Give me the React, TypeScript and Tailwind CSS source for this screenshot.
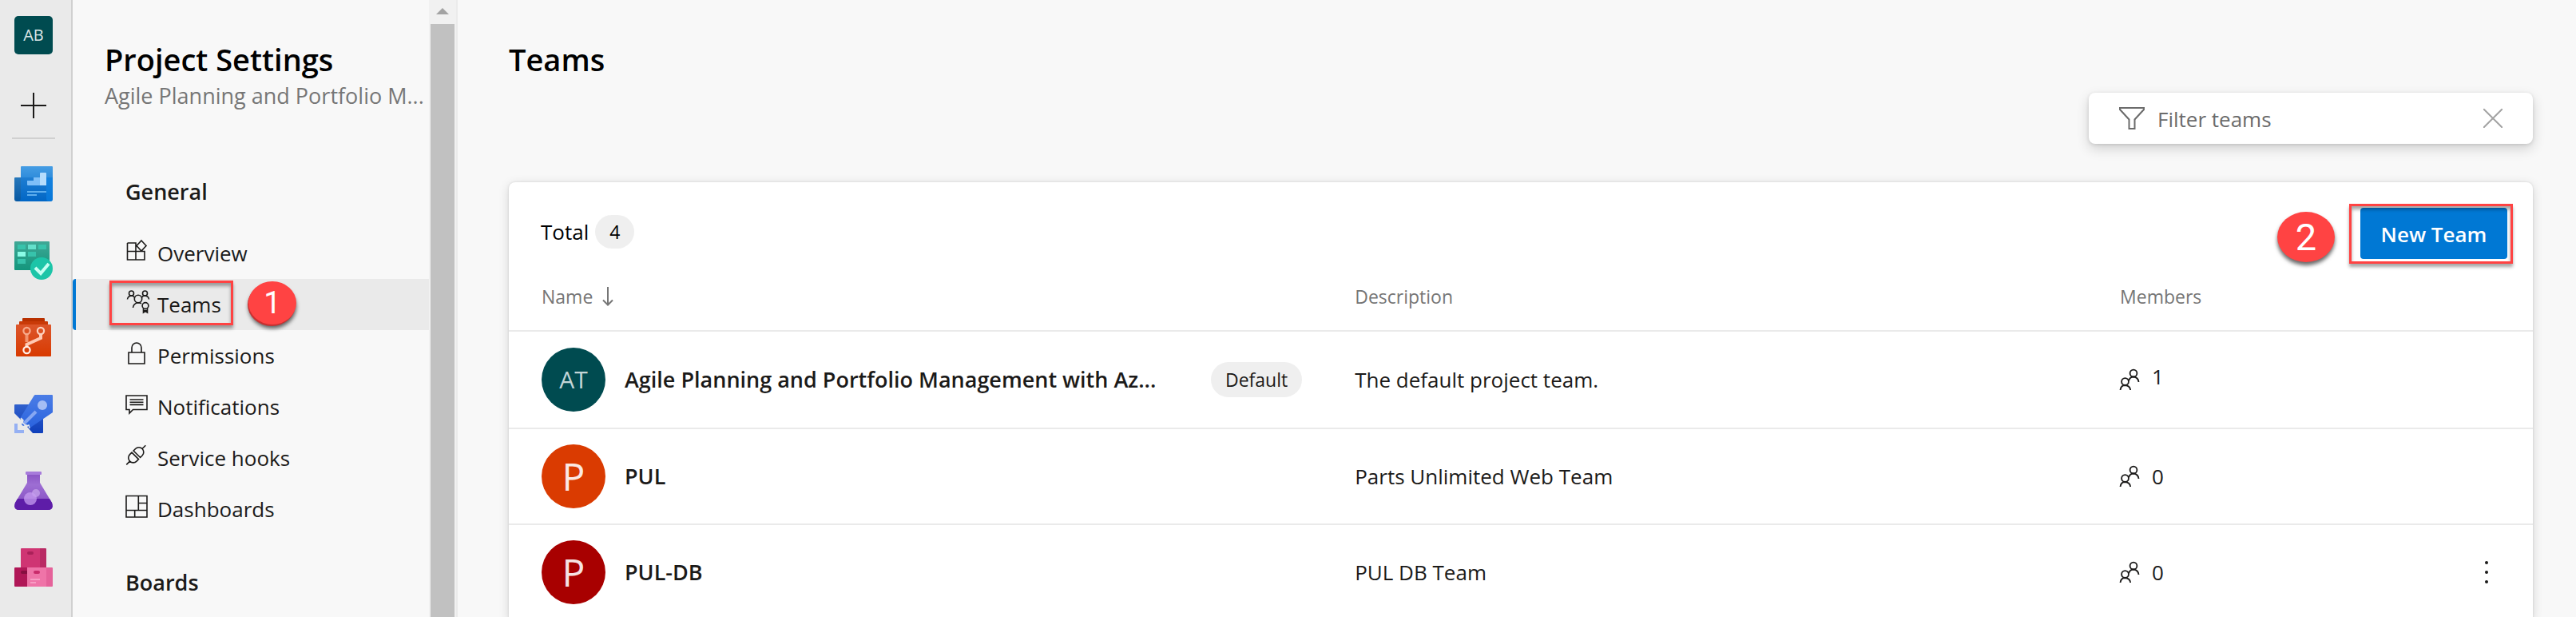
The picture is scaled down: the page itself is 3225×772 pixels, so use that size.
import type { ReactNode } from "react";

function RailIcon({ label, children }: { label: string; children: ReactNode }) {
  return (
    <a href="#" aria-label={label} className="block size-12">
      <svg viewBox="0 0 48 48" className="size-12">{children}</svg>
    </a>
  );
}

function Rail() {
  return (
    <nav aria-label="Services" className="flex shrink-0 flex-col items-center border-r-2 border-[#d0d0d0] bg-[#eaeaea] pt-5 pr-[5px] w-[91px]">
      <svg width="0" height="0" className="absolute">
        <defs>
          <linearGradient id="ov" x1="0" y1="0" x2="0" y2="1"><stop offset="0" stopColor="#459de4" /><stop offset="1" stopColor="#0269c8" /></linearGradient>
          <linearGradient id="ovb" x1="0" y1="0" x2="0" y2="1"><stop offset="0" stopColor="#2878bb" /><stop offset="1" stopColor="#0758a2" /></linearGradient>
          <linearGradient id="bd" x1="0" y1="0" x2="0" y2="1"><stop offset="0" stopColor="#40a896" /><stop offset="1" stopColor="#13967c" /></linearGradient>
          <linearGradient id="rp" x1="0" y1="0" x2="0" y2="1"><stop offset="0" stopColor="#dc562b" /><stop offset="1" stopColor="#d83a01" /></linearGradient>
          <linearGradient id="pl" x1="0" y1="0" x2="0" y2="1"><stop offset="0" stopColor="#4b7de6" /><stop offset="1" stopColor="#2a63de" /></linearGradient>
          <linearGradient id="plb" x1="0" y1="0" x2="0" y2="1"><stop offset="0" stopColor="#3161cd" /><stop offset="1" stopColor="#0f3fbb" /></linearGradient>
          <linearGradient id="fl" x1="0" y1="0" x2="0" y2="1"><stop offset="0" stopColor="#8a54c4" /><stop offset="0.3" stopColor="#9d6ed3" /><stop offset="1" stopColor="#7f47bd" /></linearGradient>
        </defs>
      </svg>
      <button type="button" aria-label="Project AB" className="flex size-12 items-center justify-center rounded-[5px] bg-[#004b50] text-[20px] leading-6 text-[#dbe6e7]">AB</button>
      <button type="button" aria-label="Add" className="mt-12 flex size-8">
        <svg viewBox="0 0 32 32" className="size-8"><path d="M16 0v32M0 16h32" stroke="#1b1a19" strokeWidth="2" /></svg>
      </button>
      <hr className="mt-6 w-[54px] border-t-2 border-[#d0d0d0]" />
      <div className="mt-8 flex flex-col gap-12">
        <RailIcon label="Overview">
          <path d="M1 16h9v30H3a3 3 0 0 1-3-3V17q0-1 1-1z" fill="url(#ovb)" />
          <path d="M9 2h38q1 0 1 1v40a3 3 0 0 1-3 3H4q4 0 4-4V3q0-1 1-1z" fill="url(#ov)" />
          <path d="M8 16h32v30H5q3-1 3-4z" fill="#0062bf" opacity=".35" />
          <path d="M40 16h8v27q0 3-4 3-4 0-4-4z" fill="#0a7ee0" opacity=".7" />
          <path d="M16 20h8v-4h8v10H17q-1 0-1-1z" fill="#7fbff8" />
          <path d="M32 11q0-1 1-1h6q1 0 1 1v15h-8z" fill="#b5dcfc" />
          <path d="M16 34h24M16 38h12" stroke="#5eaeee" strokeWidth="2" />
        </RailIcon>
        <RailIcon label="Boards">
          <rect width="44" height="36" rx="1" fill="url(#bd)" />
          <path d="M4 4h10v6H4zM30 4h10v6H30zM17 13h10v6H17zM4 22h10v6H4z" fill="#37c3ab" />
          <path d="M17 4h10v6H17z" fill="#63e0cb" />
          <path d="M4 13h10v6H4z" fill="#8bfbe6" />
          <circle cx="34" cy="34" r="14" fill="#1cc5a8" />
          <path d="M26 33l7 7 10-12" fill="none" stroke="#c6fff3" strokeWidth="4" />
        </RailIcon>
        <RailIcon label="Repos">
          <path d="M11 0h26q1 0 1 1v4H10V1q0-1 1-1z" fill="#b83000" />
          <path d="M7 4h34q1 0 1 1v5H6V5q0-1 1-1z" fill="#c93a08" />
          <rect x="2" y="8" width="44" height="40" rx="1" fill="url(#rp)" />
          <g fill="none" strokeWidth="4">
            <path d="M15.500 20v10" stroke="#f2926e" />
            <path d="M33 20v5l-17.500 8v4" stroke="#ffc9b3" />
          </g>
          <g fill="none" strokeWidth="2.200">
            <circle cx="15.500" cy="16" r="4.100" stroke="#f7a98b" />
            <circle cx="33" cy="16" r="4.100" stroke="#fcd2c0" />
            <circle cx="15.500" cy="40" r="4.100" stroke="#fff0ea" />
          </g>
        </RailIcon>
        <RailIcon label="Pipelines">
          <path d="M1 12h20L8 31l-8-8V13q0-1 1-1zM36 28v19q0 1-1 1H23l-7-8z" fill="url(#plb)" />
          <path d="M26 0h21q1 0 1 1v21L20 41l-5-4-4 2-2-2 2-4-3-5L24 2q1-2 2-2z" fill="url(#pl)" />
          <circle cx="35" cy="13" r="6" fill="#a5bdf4" />
          <path d="M27 21L11.500 36.500" stroke="#86a7f2" strokeWidth="4" />
          <path d="M8 29l3 3-1 3 5 4 3-1 1 4" fill="none" stroke="#eaeaea" strokeWidth="1.500" />
          <path d="M0 36h4v8h8v4H0z" fill="#95b0f3" />
        </RailIcon>
        <RailIcon label="Test Plans">
          <path d="M16 3h16v11l15 25q3 9-5 9H6q-8 0-5-9l15-25z" fill="url(#fl)" />
          <path d="M4 34h40l3 5q3 9-5 9H6q-8 0-5-9z" fill="#5e1da8" />
          <rect x="14" width="20" height="4" rx="1" fill="#a77bdb" />
          <circle cx="27" cy="27" r="5" fill="#c39fe8" opacity=".8" />
          <circle cx="20" cy="34" r="8" fill="#c79cf0" opacity=".75" />
        </RailIcon>
        <RailIcon label="Artifacts">
          <path d="M9 0h24v24H8V1q0-1 1-1z" fill="#cf3573" />
          <path d="M32 0h7q1 0 1 1v23h-8z" fill="#b92a64" />
          <path d="M1 24h15v24H1q-1 0-1-1V25q0-1 1-1z" fill="#b01757" />
          <path d="M16 24h24v24H16z" fill="#ef74a8" />
          <path d="M40 24h7q1 0 1 1v22q0 1-1 1h-7z" fill="#e5629a" />
          <rect x="16" y="4" width="8" height="4" rx="2" fill="#aa2159" />
          <path d="M10 28h6v4h-6a2 2 0 0 1 0-4z" fill="#860e40" />
          <rect x="24" y="28" width="8" height="4" rx="2" fill="#c92c6b" />
          <path d="M20 39h12M20 43h7" stroke="#f79dc4" strokeWidth="2" />
        </RailIcon>
      </div>
    </nav>
  );
}

const icons: Record<string, ReactNode> = {
  Overview: <path d="M2.500 5H13V26M2.500 5V26H24V15.500H2.500M20 2l6 6.500-6 6.500-6-6.500z" />,
  Teams: (
    <>
      <circle cx="7.500" cy="4" r="3" />
      <circle cx="24.500" cy="4" r="3" />
      <circle cx="16" cy="11" r="4.700" />
      <path d="M2.500 11.500q.5-4 5-4.500 3 .2 4.200 2.500M29.500 11.500q-.5-4-5-4.500-3 .2-4.200 2.500M9.500 22q.5-5.500 6.500-6.300 2.200 0 4 1" />
      <circle cx="25" cy="19.500" r="3.900" />
      <path d="M22.500 23v5l2.500-1.500 2.500 1.500v-5M22.500 25.500h5" />
    </>
  ),
  Permissions: <path d="M4 14h20v14H4zM8 14V8a6 6 0 0 1 12 0v6" />,
  Notifications: <path d="M1 4h26v17.500H9.500L5 26v-4.500H1zM5.500 9h17M5.500 12.200h17M5.500 15.400h17" />,
  "Service hooks": (
    <g transform="translate(13.300 14.300) rotate(-45)">
      <path d="M-1.500-6H-5a6 6 0 0 0 0 12H-1.500zM1.500-6H5a6 6 0 0 1 0 12H1.500zM-11 0h-6M11 0h6" />
    </g>
  ),
  Dashboards: <path d="M1 1.500h26v26.500H1zM1 19.500h26M16.300 1.500v18M16.300 10.500H27M11.700 19.500V28" />,
};

function Sidebar() {
  return (
    <aside className="flex w-[482px] shrink-0 border-r-2 border-[#ebebeb]">
      <div className="min-w-0 flex-1 pt-12">
        <div className="pl-10">
          <h2 className="text-[38px] leading-[52px] font-semibold text-black">Project Settings</h2>
          <p className="text-[27px] leading-10 whitespace-nowrap text-[#767676]">Agile Planning and Portfolio M...</p>
        </div>
        <nav aria-label="Project settings" className="pt-10">
          <h3 className="mb-[25px] pt-10 pl-[66px] text-[27px] leading-10 font-semibold">General</h3>
          <ul>
            {Object.keys(icons).map((name) => {
              const on = name === "Teams";
              return (
                <li key={name} className="relative">
                  <a href="#" aria-current={on ? "page" : undefined} className={`flex h-16 items-center gap-3 border-l-4 pl-[62px] text-[26px] leading-10 ${on ? "rounded-l-sm border-[#0078d4] bg-[#eaeaea]" : "border-transparent"}`}>
                    <svg viewBox="0 0 28 28" className="mb-2 size-7 overflow-visible" fill="none" stroke="#1b1a19" strokeWidth="1.600">{icons[name]}</svg>
                    {name}
                  </a>
                  {on && (
                    <>
                      <span className="absolute top-[2px] left-[46px] h-14 w-[155px] border-3 border-[#ff4343] shadow-[0_4px_4px_rgba(0,0,0,.35),inset_0_4px_4px_rgba(0,0,0,.35)]" />
                      <span className="absolute top-[3px] left-[220px] flex h-[54px] w-[60px] items-center justify-center rounded-[50%] bg-[#ff4343] font-['Roboto',sans-serif] text-[38px] leading-10 text-white shadow-[-1px_2px_0_#c93030,0_5px_5px_rgba(0,0,0,.6)]">1</span>
                    </>
                  )}
                </li>
              );
            })}
          </ul>
          <h3 className="pt-10 pl-[66px] text-[27px] leading-10 font-semibold">Boards</h3>
        </nav>
      </div>
      <div className="flex w-[34px] shrink-0 flex-col items-center bg-[#f1f1f1] pt-[10px]">
        <svg viewBox="0 0 16 8" className="h-2 w-4 shrink-0"><path d="M8 0l8 8H0z" fill="#a3a3a3" /></svg>
        <div className="mt-3 w-[30px] flex-1 bg-[#c1c1c1]" />
      </div>
    </aside>
  );
}

const teams = [
  { name: "Agile Planning and Portfolio Management with Az...", initials: "AT", color: "bg-[#004b50]", size: "text-[30px] text-[#c3d5d6]", description: "The default project team.", members: 1, isDefault: true },
  { name: "PUL", initials: "P", color: "bg-[#da3b01]", size: "text-[48px] text-[#fbe9e3]", description: "Parts Unlimited Web Team", members: 0 },
  { name: "PUL-DB", initials: "P", color: "bg-[#a80000]", size: "text-[48px] text-[#f6e3e3]", description: "PUL DB Team", members: 0, menu: true },
];

function TeamsTable() {
  return (
    <table className="w-full table-fixed border-separate border-spacing-0 text-left">
      <thead>
        <tr className="text-[23px] leading-8 text-[#767676]">
          <th className="h-[91px] w-[41.8%] border-b-2 border-[#eaeaea] pt-1 pl-[41px] font-medium">
            <span className="flex items-center gap-3">
              Name
              <svg viewBox="0 0 14 24" className="h-6 w-[14px]" fill="none" stroke="#767676" strokeWidth="2"><path d="M7 0v23M1 16.500l6 6 6-6" /></svg>
            </span>
          </th>
          <th className="w-[37.8%] border-b-2 border-[#eaeaea] pt-1 font-medium">Description</th>
          <th className="border-b-2 border-[#eaeaea] pt-1 font-medium">Members</th>
        </tr>
      </thead>
      <tbody className="text-[26px] leading-8">
        {teams.map((t, i) => {
          const line = i > 0 ? "border-t-2 border-[#eaeaea]" : "";
          return (
            <tr key={t.name}>
              <td className={`h-[120px] pl-[41px] ${line}`}>
                <div className="flex items-center gap-6">
                  <span className={`flex size-20 shrink-0 items-center justify-center rounded-full leading-none ${t.color} ${t.size}`}>{t.initials}</span>
                  <a href="#" className="text-[27px] leading-10 font-semibold whitespace-nowrap">{t.name}</a>
                  {t.isDefault && <span className="mr-[66px] ml-auto flex h-11 items-center rounded-full bg-[#efefef] px-[18px] text-[23px]">Default</span>}
                </div>
              </td>
              <td className={line}>{t.description}</td>
              <td className={line}>
                <div className="flex h-10 items-center gap-4 pr-14">
                  <svg viewBox="0 0 24 26" className="h-[26px] w-6 overflow-visible" fill="none" stroke="#1b1a19" strokeWidth="1.800">
                    <circle cx="17" cy="5" r="4.400" />
                    <circle cx="6.500" cy="15.500" r="4.400" />
                    <path d="M11 14.500q1.500-5 6-5 6 .8 6.500 6.500M.5 26q.8-6 6-6 6 .5 6.700 6" />
                  </svg>
                  <span className={t.isDefault ? "self-start" : ""}>{t.members}</span>
                  {t.menu && (
                    <button type="button" aria-label="More options" className="ml-auto">
                      <svg viewBox="0 0 4 28" className="h-7 w-1" fill="#1b1a19"><circle cx="2" cy="2" r="2" /><circle cx="2" cy="14" r="2" /><circle cx="2" cy="26" r="2" /></svg>
                    </button>
                  )}
                </div>
              </td>
            </tr>
          );
        })}
      </tbody>
    </table>
  );
}

export default function App() {
  return (
    <div className="flex h-screen overflow-hidden bg-[#f8f8f8] font-['Open_Sans','Noto_Sans',sans-serif] text-[#1b1a19]">
      <Rail />
      <Sidebar />
      <main className="flex min-w-0 flex-1 flex-col pt-12 pr-[54px] pl-16">
        <h1 className="text-[38px] leading-[52px] font-semibold text-black">Teams</h1>
        <div className="mt-4 flex h-16 w-[556px] shrink-0 items-center gap-4 self-end rounded-lg bg-white pr-[38px] pl-[38px] shadow-[0_6px_16px_rgba(0,0,0,.16),0_1px_4px_rgba(0,0,0,.12)]">
          <svg viewBox="0 0 32 28" className="h-7 w-8 shrink-0" fill="none" stroke="#6b6b6b" strokeWidth="2"><path d="M1 1h30v2L19.500 15.500V27h-7V15.500L1 3z" /></svg>
          <input aria-label="Filter teams" placeholder="Filter teams" className="min-w-0 flex-1 pt-0.5 text-[26px] leading-10 outline-none placeholder:text-[#6b6b6b]" />
          <button type="button" aria-label="Clear filter">
            <svg viewBox="0 0 24 24" className="size-6" fill="none" stroke="#a3a3a3" strokeWidth="2"><path d="M0 0l24 24M24 0L0 24" /></svg>
          </button>
        </div>
        <section className="mt-12 flex-1 rounded-t-lg bg-white pt-8 shadow-[0_3px_14px_rgba(0,0,0,.14),0_0_3px_rgba(0,0,0,.12)]">
          <div className="flex h-16 items-center justify-between pr-8 pl-10">
            <div className="flex items-center gap-2 pb-1 text-[26px] leading-8 text-black">
              Total
              <span className="flex h-[42px] items-center rounded-full bg-[#efefef] px-[18px] text-[23px]">4</span>
            </div>
            <div className="relative">
              <button type="button" className="h-16 w-[184px] rounded-sm bg-[#0078d4] pt-0.5 text-[26px] leading-8 font-semibold text-white">New Team</button>
              <span className="pointer-events-none absolute -top-[5px] -left-[14px] h-[75px] w-[205px] border-3 border-[#ff4343] shadow-[0_4px_4px_rgba(0,0,0,.35),inset_0_4px_4px_rgba(0,0,0,.35)]" />
              <span className="absolute top-[5px] -left-[104px] flex h-[63px] w-[72px] items-center justify-center rounded-[50%] bg-[#ff4343] font-['Roboto',sans-serif] text-[47px] leading-none text-white shadow-[0_4px_5px_rgba(0,0,0,.6)]">2</span>
            </div>
          </div>
          <TeamsTable />
        </section>
      </main>
    </div>
  );
}
